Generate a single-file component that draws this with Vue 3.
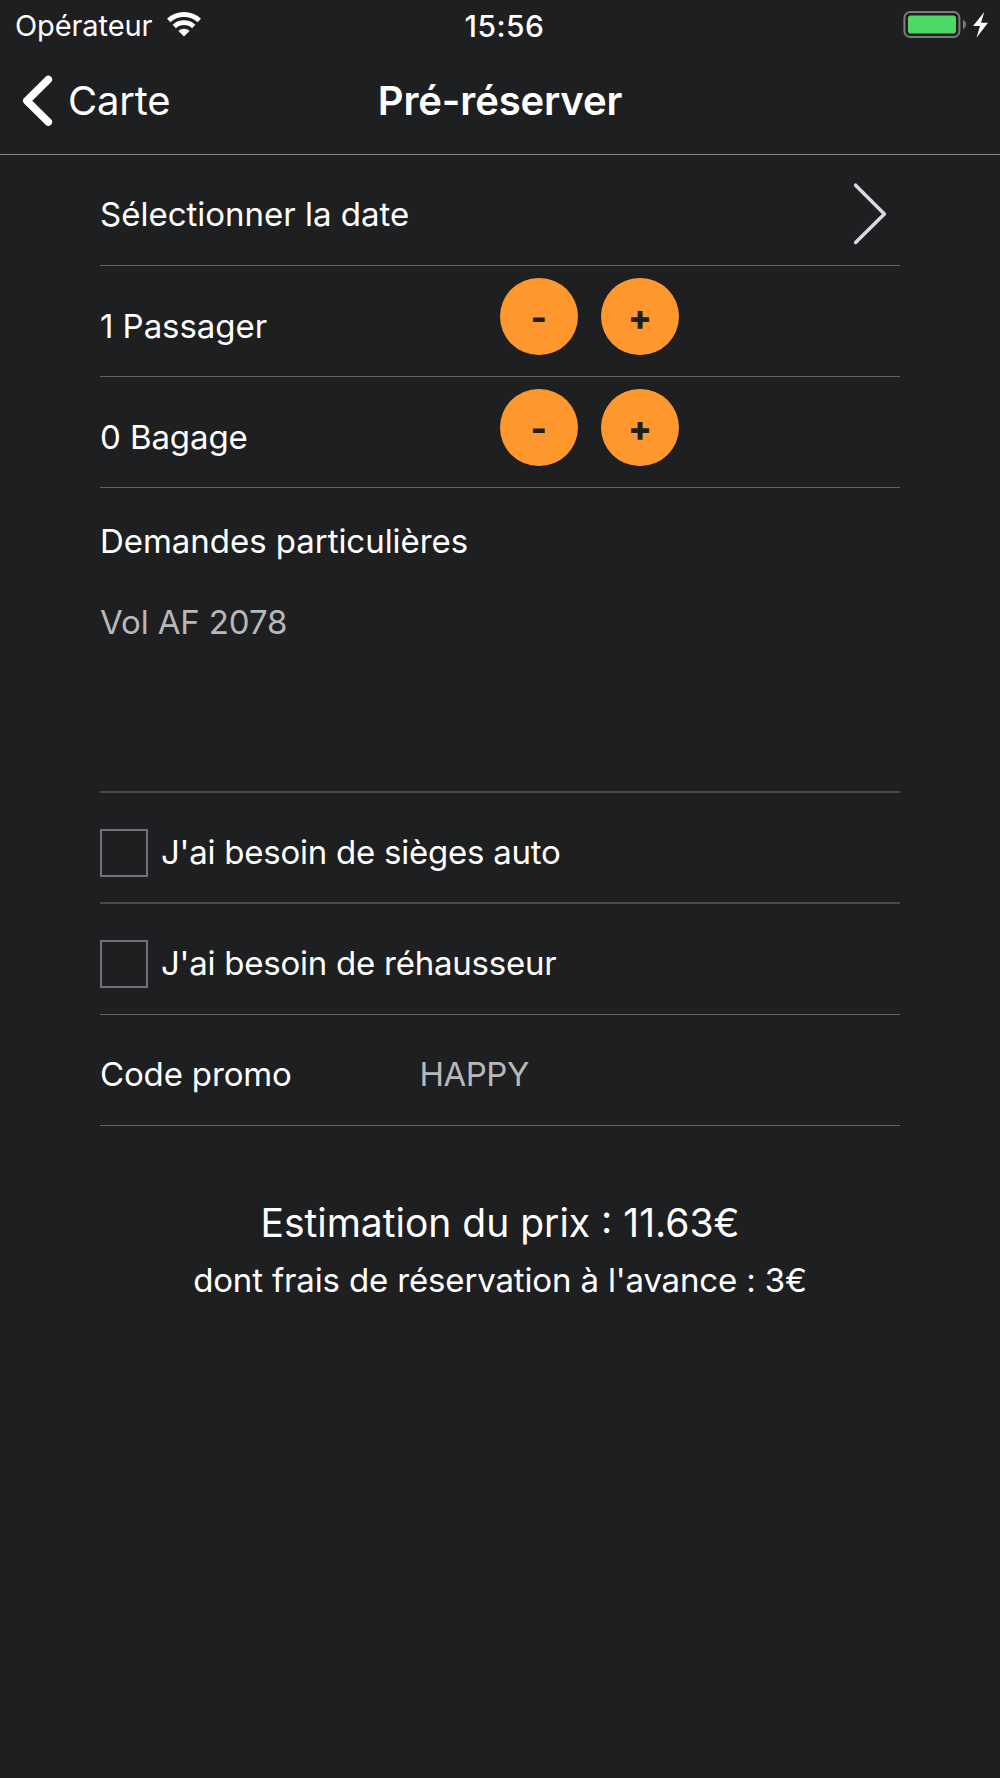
<script setup>
import { ref } from 'vue'

const counters = ref([
  { label: 'Passager', count: 1, min: 1, tracking: '-0.05px' },
  { label: 'Bagage', count: 0, min: 0, tracking: '-0.1px' }
])
const options = ref([
  { label: "J'ai besoin de sièges auto", checked: false },
  { label: "J'ai besoin de réhausseur", checked: false }
])

function decrement(counter) {
  if (counter.count > counter.min) counter.count--
}
</script>

<template>
  <main class="screen">
    <div class="status">
      <div class="carrier">
        <span>Opérateur</span>
        <svg class="wifi" width="34" height="25" viewBox="0 0 34 25">
          <g fill="none" stroke="#fff" stroke-width="4.8">
            <path d="M1.7 8.5C10.2 0.5 23.8 0.5 32.3 8.5" />
            <path d="M7.3 14.4C12.7 9.3 21.3 9.3 26.7 14.4" />
          </g>
          <path d="M11.4 19C14.6 16 19.4 16 22.6 19L17 24.6Z" fill="#fff" />
        </svg>
      </div>
      <span class="clock">15:56</span>
      <div class="power">
        <svg width="86" height="30" viewBox="0 0 86 30">
          <rect x="1.4" y="1.9" width="55" height="25.2" rx="6" fill="none" stroke="#7b7c7e" stroke-width="2" />
          <rect x="5" y="5.5" width="48" height="18" rx="2.8" fill="#4cd964" />
          <path d="M60 9.5Q63 11.5 63 14.5T60 19.5Z" fill="#7b7c7e" />
          <path d="M81.3 2L70 16H77L73.5 27.8L85 12.8H78Z" fill="#fff" />
        </svg>
      </div>
    </div>

    <header class="nav">
      <button class="back">
        <svg width="32" height="54" viewBox="0 0 32 54">
          <path d="M27.3 5.5L5.8 26.7L27.3 48" fill="none" stroke="#fff" stroke-width="7.6" stroke-linecap="round" stroke-linejoin="round" />
        </svg>
        <span>Carte</span>
      </button>
      <h1>Pré-réserver</h1>
    </header>

    <section class="form">
      <div class="row date">
        <span>Sélectionner la date</span>
        <svg width="36" height="64" viewBox="0 0 36 64">
          <path d="M3.6 3.2L32.4 32L3.6 60.4" fill="none" stroke="#d9dadd" stroke-width="3.5" stroke-linecap="round" stroke-linejoin="round" />
        </svg>
      </div>

      <div v-for="c in counters" :key="c.label" class="row counter">
        <span class="label" :style="{ letterSpacing: c.tracking }">{{ c.count }} {{ c.label }}</span>
        <div class="stepper">
          <button @click="decrement(c)">-</button>
          <button @click="c.count++">+</button>
        </div>
      </div>

      <div class="requests">
        <span>Demandes particulières</span>
        <span class="placeholder">Vol AF 2078</span>
      </div>

      <label v-for="o in options" :key="o.label" class="row option">
        <i class="box" @click="o.checked = !o.checked"></i>
        <span>{{ o.label }}</span>
      </label>

      <div class="row promo">
        <span class="label">Code promo</span>
        <span class="code">HAPPY</span>
      </div>
    </section>

    <footer class="estimate">
      <p class="price">Estimation du prix : 11.63€</p>
      <p class="fee">dont frais de réservation à l'avance : 3€</p>
    </footer>
  </main>
</template>

<style>
body {
  background: #1e1f21;
}
</style>

<style scoped>
.screen {
  box-sizing: border-box;
  width: 1000px;
  height: 1778px;
  background: #1e1f21;
  color: #fff;
  font: 33px/40px Inter, "Liberation Sans", sans-serif;
  overflow: hidden;
}
button {
  margin: 0;
  padding: 0;
  border: 0;
  background: none;
  color: inherit;
  font: inherit;
}
svg {
  display: block;
}
.status {
  display: grid;
  grid-template-columns: 1fr auto 1fr;
  align-items: center;
  height: 50px;
}
.carrier {
  display: flex;
  align-items: center;
  padding: 1px 0 0 15px;
  font-size: 29px;
  letter-spacing: -0.1px;
}
.wifi {
  margin: -2px 0 0 15px;
}
.clock {
  padding: 1px 0 0 9px;
  font-size: 30px;
  font-weight: 500;
  letter-spacing: 0.5px;
}
.power {
  display: flex;
  justify-content: flex-end;
  padding-right: 11px;
}
.nav {
  box-sizing: border-box;
  display: grid;
  grid-template-columns: 1fr auto 1fr;
  align-items: center;
  height: 105px;
  padding-bottom: 3px;
  border-bottom: 1px solid #828385;
}
.back {
  display: flex;
  align-items: center;
  gap: 15px;
  padding-left: 21px;
  font-size: 40px;
  letter-spacing: -0.2px;
}
h1 {
  margin: 0;
  font-size: 40px;
  font-weight: 600;
  letter-spacing: -0.15px;
}
.form {
  margin: 0 100px;
}
.row {
  box-sizing: border-box;
  display: flex;
  align-items: center;
  height: 111px;
  padding-top: 8px;
  border-bottom: 1px solid #606163;
}
.date {
  justify-content: space-between;
}
.date svg {
  margin-right: 12px;
}
.counter .label {
  width: 400px;
  padding-top: 1px;
}
.stepper {
  display: flex;
  gap: 23.5px;
  margin-top: -17px;
}
.stepper button {
  width: 77.6px;
  height: 77.6px;
  border-radius: 50%;
  background: #fe972e;
  color: #1e1f21;
  font-size: 35px;
  font-weight: 800;
}
.requests {
  box-sizing: border-box;
  display: flex;
  flex-direction: column;
  gap: 41px;
  height: 305px;
  padding-top: 33px;
  border-bottom: 2px solid #48494b;
  letter-spacing: -0.04px;
}
.placeholder,
.code {
  color: #b8b8b8;
}
.placeholder {
  letter-spacing: -0.12px;
}
.option {
  gap: 13px;
  letter-spacing: -0.24px;
}
.option:nth-of-type(1) {
  border-bottom: 2px solid #48494b;
}
.box {
  box-sizing: border-box;
  width: 48px;
  height: 48px;
  margin-top: 2px;
  border: 2px solid #717277;
}
.promo .label {
  width: 319.5px;
  letter-spacing: -0.15px;
}
.code {
  letter-spacing: -0.5px;
}
.estimate {
  padding-top: 73px;
  text-align: center;
}
.estimate p {
  margin: 0;
}
.estimate .price {
  font-size: 39px;
  line-height: 48px;
}
.estimate .fee {
  margin-top: 13px;
  letter-spacing: -0.15px;
}
</style>
